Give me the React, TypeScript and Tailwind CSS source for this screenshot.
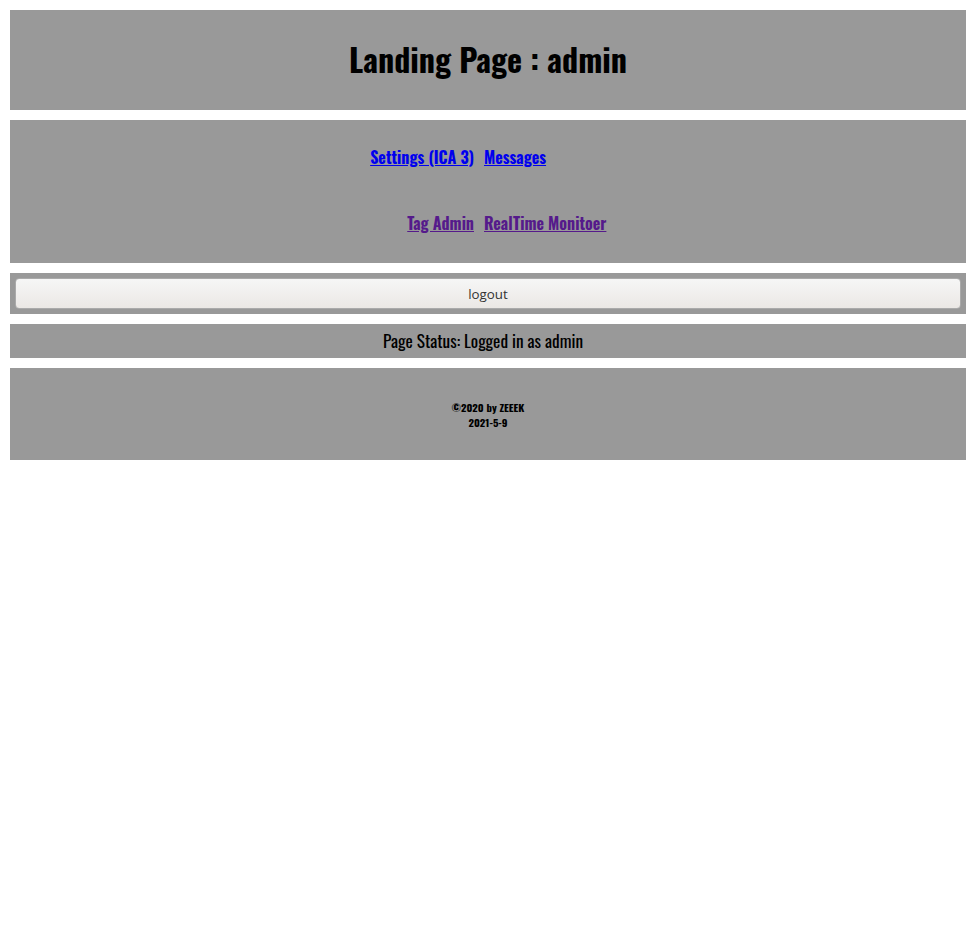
import React from 'react';

export default function App() {
  return (
    <div className="flex flex-col gap-[10px] bg-white p-[10px] font-['Oswald',sans-serif] text-black">
      <div className="flex h-[100px] items-center justify-center bg-[#999999]">
        <h1 className="pb-[2px] text-[32px] font-bold leading-none">Landing Page : admin</h1>
      </div>
      <div className="flex h-[143px] flex-col justify-center bg-[#999999] pr-[18px]">
        <div className="grid grid-cols-2 gap-x-[10px] gap-y-[42px] pb-[4px] text-[16px] font-bold leading-[24px]">
          <div className="text-right">
            <a href="#" className="text-[#0000ee] underline">Settings (ICA 3)</a>
          </div>
          <div>
            <a href="#" className="text-[#0000ee] underline">Messages</a>
          </div>
          <div className="text-right">
            <a href="#" className="text-[#551a8b] underline">Tag Admin</a>
          </div>
          <div>
            <a href="#" className="text-[#551a8b] underline">RealTime Monitoer</a>
          </div>
        </div>
      </div>
      <div className="bg-[#999999] p-[5px]">
        <button className="h-[31px] w-full rounded-[4px] border border-[#aaaaaa] bg-gradient-to-b from-[#f6f6f6] to-[#ebe8e5] pt-[2px] font-['Open_Sans',sans-serif] text-[13.33px] text-[#333333]">
          logout
        </button>
      </div>
      <div className="flex h-[34px] items-center justify-center bg-[#999999] pr-[10px] text-[17.3px]">
        Page Status: Logged in as admin
      </div>
      <div className="flex h-[92px] flex-col items-center justify-center bg-[#999999] pt-[2px] text-[10.7px] font-bold leading-[15px]">
        <div>©2020 by ZEEEK</div>
        <div>2021-5-9</div>
      </div>
    </div>
  );
}
